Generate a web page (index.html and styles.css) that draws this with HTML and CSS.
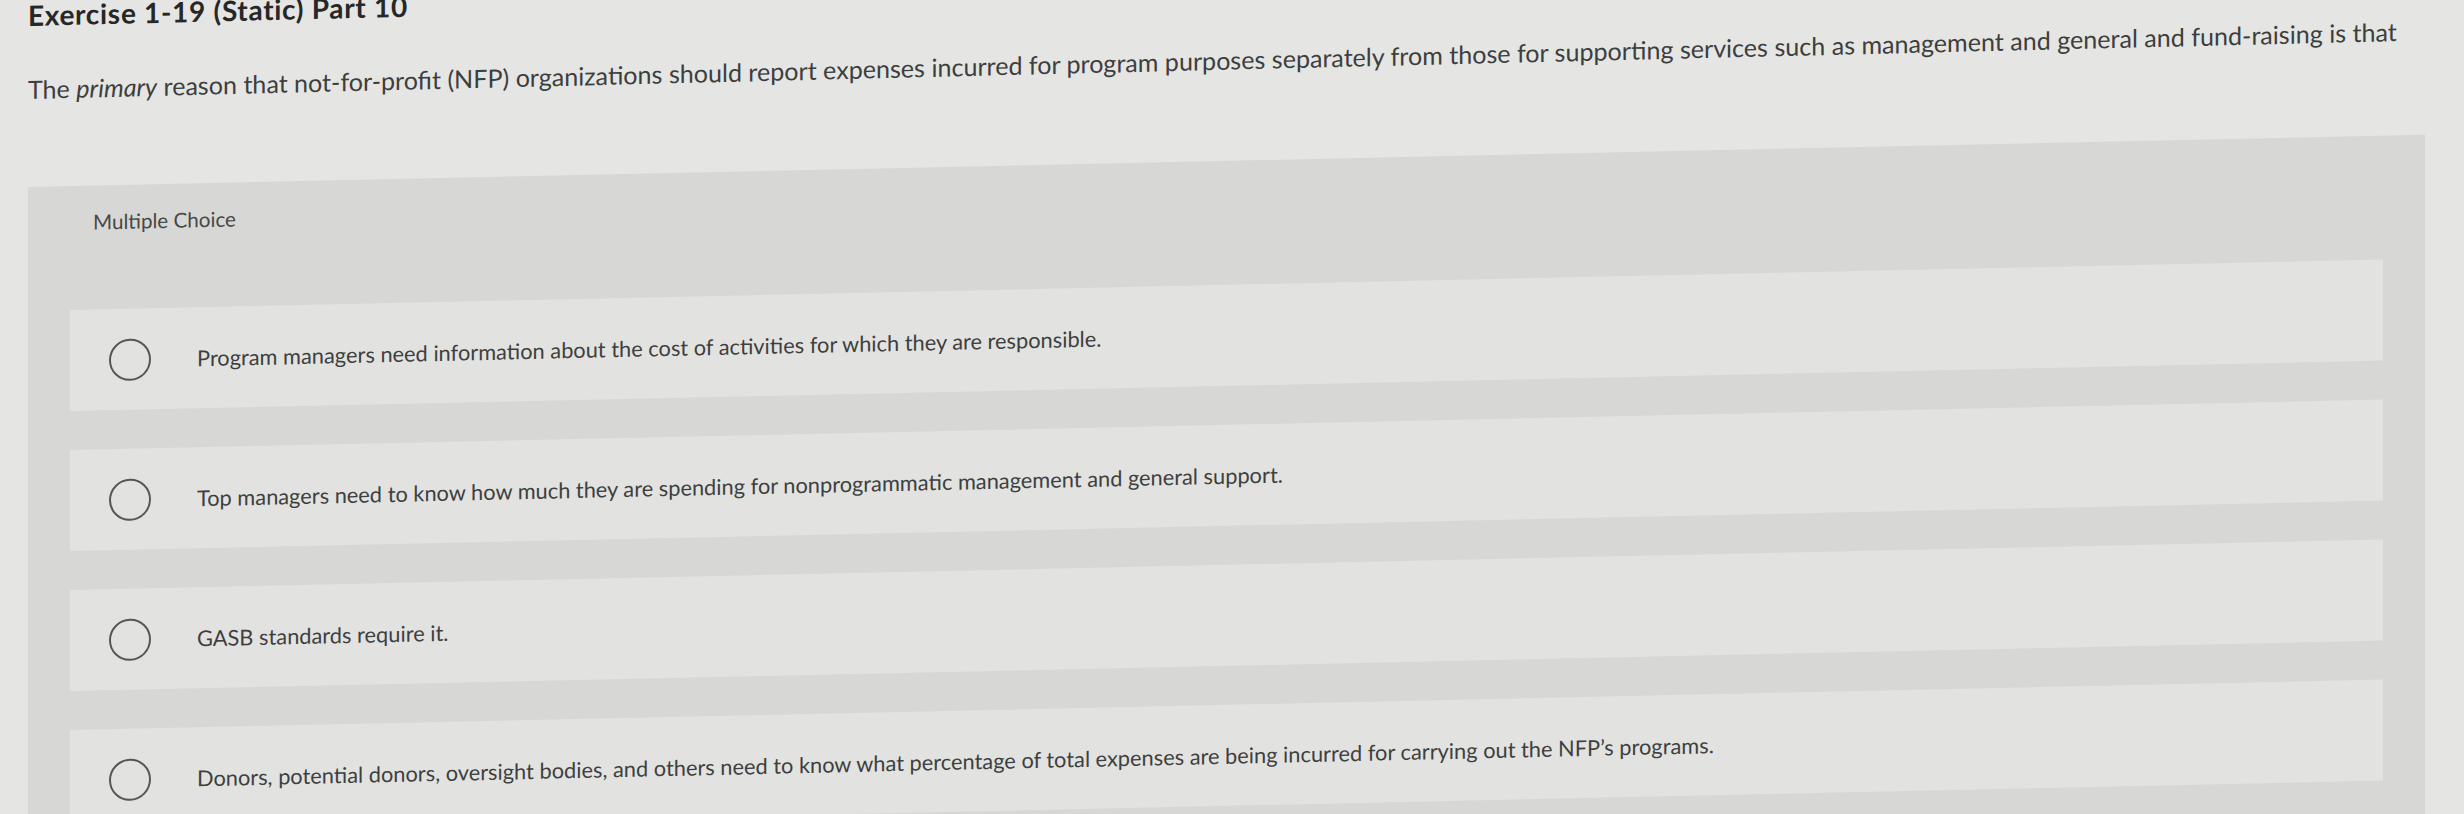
FILE: index.html
```html
<!DOCTYPE html>
<html lang="en">
<head>
<meta charset="utf-8">
<title>Exercise 1-19 (Static) Part 10</title>
<link rel="stylesheet" href="styles.css">
</head>
<body>
<div class="page">
  <div class="intro">
    <h1 class="title">Exercise 1-19 (Static) Part 10</h1>
    <p class="question">The <em>primary</em> reason that not-for-profit (NFP) organizations should report expenses incurred for program purposes separately from those for supporting services such as management and general and fund-raising is that</p>
  </div>
  <div class="panel">
    <div class="panel-head">Multiple Choice</div>
    <div class="options">
      <label class="option"><span class="radio"></span><span class="opt-text">Program managers need information about the cost of activities for which they are responsible.</span></label>
      <label class="option"><span class="radio"></span><span class="opt-text">Top managers need to know how much they are spending for nonprogrammatic management and general support.</span></label>
      <label class="option"><span class="radio"></span><span class="opt-text">GASB standards require it.</span></label>
      <label class="option"><span class="radio"></span><span class="opt-text">Donors, potential donors, oversight bodies, and others need to know what percentage of total expenses are being incurred for carrying out the NFP’s programs.</span></label>
    </div>
  </div>
</div>
</body>
</html>
```
FILE: styles.css
```css
html, body {
  margin: 0;
  padding: 0;
  background: #e5e6e3;
}
body {
  height: 814px;
  overflow: hidden;
  font-family: Lato, "Open Sans", sans-serif;
}
.page {
  padding: 0 39px 0 28px;
}
.intro {
  padding-top: 2px;
  transform: skewY(-1.4deg);
  transform-origin: 0 0;
}
.title {
  margin: 0;
  font-size: 28px;
  line-height: 26px;
  font-weight: 700;
  letter-spacing: 0.7px;
  color: #262727;
  white-space: nowrap;
}
.question {
  margin: 47px 0 0;
  font-size: 25.1px;
  line-height: 29px;
  color: #3d3e3e;
  white-space: nowrap;
}
.question em {
  font-style: italic;
}
.panel {
  margin-top: 83px;
  background: #d7d8d5;
  padding: 0 42px;
  transform: skewY(-1.25deg);
  transform-origin: 0 0;
}
.panel-head {
  height: 75px;
  box-sizing: border-box;
  padding: 24px 0 0 23px;
  font-size: 20.6px;
  line-height: 24px;
  color: #464747;
}
.options {
  display: flex;
  flex-direction: column;
  gap: 39px;
  padding-top: 49px;
  padding-bottom: 40px;
}
.option {
  display: flex;
  align-items: center;
  gap: 46px;
  height: 101px;
  padding-left: 39px;
  background: #e2e3e0;
}
.radio {
  flex: none;
  width: 42px;
  height: 42px;
  box-sizing: border-box;
  border: 2.5px solid #555657;
  border-radius: 50%;
}
.opt-text {
  font-size: 21.8px;
  line-height: 26px;
  color: #3e3f3f;
  white-space: nowrap;
}
```
